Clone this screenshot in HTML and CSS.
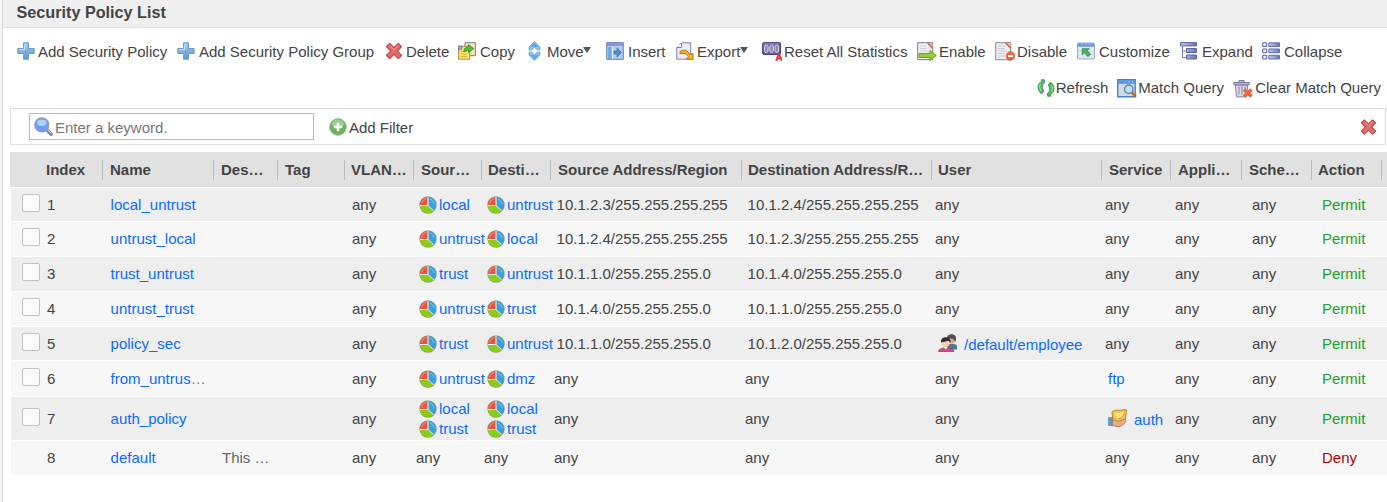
FILE: index.html
```
<!DOCTYPE html>
<html lang="en">
<head>
<meta charset="utf-8">
<title>Security Policy List</title>
<link rel="stylesheet" href="styles.css">
</head>
<body>
<svg class="sprite" width="0" height="0" aria-hidden="true">
  <defs>
    <linearGradient id="blue" x1="0" y1="0" x2="0" y2="1"><stop offset="0" stop-color="#a5cbed"/><stop offset="1" stop-color="#5c97cc"/></linearGradient>
    <linearGradient id="violet" x1="0" y1="0" x2="1" y2="0"><stop offset="0" stop-color="#c5cbed"/><stop offset="1" stop-color="#6b75b5"/></linearGradient>
    <symbol id="plus" viewBox="0 0 18 18"><path d="M6.500.8h5v5.700h5.700v5h-5.700v5.700h-5v-5.700H.8v-5h5.700z" fill="url(#blue)" stroke="#6f9cc6"/><path d="M7.700 2v5.700H2" fill="none" stroke="#c7e0f5"/></symbol>
    <symbol id="cross" viewBox="0 0 18 18"><path d="M1.500 4.500 4.700 1.500 9 5.700l4.300-4.200 3.200 3L12.300 9l4.200 4.500-3.200 3L9 12.300l-4.300 4.200-3.200-3L5.700 9z" fill="#e56b6b" stroke="#c44a4c" stroke-width="1.200" stroke-linejoin="round"/><path d="m4.700 3.500 4.300 4.200 4.300-4.200" fill="none" stroke="#f09a94"/></symbol>
    <symbol id="copy" viewBox="0 0 18 18"><path d="M7 .7h10.300v13H7z" fill="#f8efaa" stroke="#77719c"/><path d="M.7 4.200h11v13H.7z" fill="#fbe268" stroke="#a78e3c"/><path d="M.7 4.200h3v3h-3z" fill="#bcb7d6" stroke="#77719c"/><path d="M3 9.500h6m-6 2.500h6m-6 2.500h6" stroke="#d3b13e"/><path d="M6 8.500c.5-2.500 2-3.500 4.500-3.500V2.600l5.200 4-5.200 4V8.200C8.500 8 7.500 8.500 6 10z" fill="#4ec13c" stroke="#21882a" stroke-width=".8"/></symbol>
    <symbol id="move" viewBox="0 0 18 20"><path d="M7.500.5 13 6v3h-2.500l-3-2.800-3 2.800H2V6zM7.500 19.500 13 14v-3h-2.500l-3 2.800-3-2.800H2v3z" fill="#8cc4f2" stroke="#6aa6d6" stroke-width=".8"/><path d="M7.500 1.500 12 6H3zM3 14h9l-4.500 4.500z" fill="#63a6e0"/></symbol>
    <symbol id="insert" viewBox="0 0 18 18"><path d="M.7.7h16.600v16.600H.7z" fill="#b4cdee" stroke="#6c78ad"/><path d="M1 1h16v3H1z" fill="#8b97cf"/><path d="M2 5h4v12H2z" fill="#6aaae6"/><path d="M6.300 5v12" stroke="#f7fbff"/><path d="M8 9h3V5.800l4.500 4.700-4.500 4.700V12H8z" fill="#4e8ed1" stroke="#2d66aa" stroke-width=".6"/></symbol>
    <symbol id="export" viewBox="0 0 18 18"><path d="M5.500.8h9.200v16.400H.8V5.500z" fill="#e9ebf5" stroke="#7f83b3"/><path d="M.8 5.500h4.700V.8" fill="#fff" stroke="#7f83b3"/><path d="M4 9.500c4-2.500 8.500-1 9.500 3l3.500-1v6l-6.500-.7 2-2c-1.500-3-4-4-8.500-3z" fill="#ffb516" stroke="#a56c12" stroke-width=".9"/></symbol>
    <symbol id="reset" viewBox="0 0 20 19"><rect x=".6" y=".6" width="18" height="12" rx="1.500" fill="#655c9c" stroke="#464078"/><path d="M1.500 1.800h16" stroke="#9790c4"/><g fill="#8f8caa" stroke="#d6d4e2"><rect x="2.500" y="3" width="3.600" height="7.500" rx="1.700"/><rect x="7.800" y="3" width="3.600" height="7.500" rx="1.700"/><rect x="13" y="3" width="3.600" height="7.500" rx="1.700"/></g><path d="m14 18.800 3-7 3 7M15 16.500h4" fill="none" stroke="#ef3434" stroke-width="1.900"/></symbol>
    <symbol id="enable" viewBox="0 0 20 19"><path d="M.7.7h15v17H.7z" fill="#f0f0f3" stroke="#777a91"/><path d="M3 4h6M3 6.500h7M3 9h9" stroke="#cfd0d8"/><path d="M11 1h4.500v4z" fill="#f6b4aa"/><path d="m10.500.800 5.200 5.500" stroke="#f25446" stroke-width="1.500"/><path d="M2 11.500h11V8.500l6.300 5-6.300 5v-3H2z" fill="#97cf31" stroke="#6a9f24"/></symbol>
    <symbol id="disable" viewBox="0 0 20 19"><path d="M.7.7h15v17H.7z" fill="#eeeef1" stroke="#85889c"/><path d="M3 4h6M3 6.500h7M3 9h9m-9 2.500h7M3 14h7" stroke="#c7c8d1"/><path d="M11 1h4.500v4z" fill="#f6b4aa"/><path d="m10.500.800 5.200 5.500" stroke="#f25446" stroke-width="1.500"/><circle cx="15.500" cy="14" r="4.300" fill="#ef6347" stroke="#cf4a32" stroke-width=".6"/><path d="M13 14h5" stroke="#fff" stroke-width="2"/></symbol>
    <symbol id="custom" viewBox="0 0 19 18"><rect x=".6" y=".6" width="17.800" height="16.800" rx="1" fill="#e6eaf3" stroke="#939fc0"/><path d="M1 1h17v3.500H1z" fill="#6297e6"/><path d="M5 2h1m3 0h1m3 0h1" stroke="#d9e8ff"/><path d="M1 9h17M1 13h17M6 5v12m7-12v12" stroke="#cbd2e2" stroke-width=".7"/><path d="M5.500 6.500h7.500l-2 2 3.300 4.200-3 2.300-3.300-4.200-2.500 2.300z" fill="#48b55a" stroke="#2e8f48" stroke-width=".8"/></symbol>
    <symbol id="expand" viewBox="0 0 18 18"><path d="M2.500 4v11.500H7M2.500 9H7" fill="none" stroke="#7380b8"/><g fill="url(#violet)" stroke="#5a64a1"><path d="M.6.600h15.800v3.300H.6zM6.500 6.500h9.900v4H6.500zM6.500 13h9.900v4H6.500z"/></g></symbol>
    <symbol id="collapse" viewBox="0 0 18 18"><g fill="#eceefa" stroke="#5a64a1"><path d="M.7.8h4v3.700h-4zM.7 7h4v3.700h-4zM.7 13.300h4V17h-4z"/></g><g fill="url(#violet)" stroke="#6771ac"><path d="M6.800.8h10.700v3.700H6.800zM6.800 7h10.700v3.700H6.800zM6.800 13.300h10.700V17H6.800z"/></g></symbol>
    <symbol id="refresh" viewBox="0 0 18 18"><g fill="#54b965" stroke="#26803c" stroke-width=".7"><path d="M7.500.8v3C4.500 5.500 5 10 7 12l-2.500 3C-.6 11 .2 3.800 4.800 2.800L4 .8z"/><path d="M10.500 17.200v-3c3-1.700 2.500-6.200.5-8.200l2.500-3c5.100 4 4.300 11.200-.3 12.200l.8 2z"/></g><path d="M3.500 5C2 7 2.500 9.500 4 12m10.500 1c1.500-2 1-4.500-.5-7" fill="none" stroke="#a7e2af"/></symbol>
    <symbol id="match" viewBox="0 0 19 18"><path d="M.7.7h16.600v16.100H.7z" fill="#cfdae4" stroke="#4183cc" stroke-width="1.300"/><path d="M1 1h16v3.600H1z" fill="#5698e5"/><path d="M11 2.500h1m2 0h1" stroke="#d6eaff"/><circle cx="11.200" cy="9.700" r="4" fill="#b5e1f9" stroke="#6585a0" stroke-width="1.300"/><path d="m14.200 13 3.700 4" stroke="#b46c18" stroke-width="2.400"/></symbol>
    <symbol id="trash" viewBox="0 0 20 18"><path d="M2.300 5.500h12.400l-1.200 11.900h-10z" fill="#d8d8e7" stroke="#8584a5"/><path d="M.8 3h15.400v2.300H.8zM6 3V1h5v2" fill="#bebdd3" stroke="#77759a"/><path d="M6 7v8m3-8v8m3-8v4" stroke="#8583a6"/><path d="m11 10 7.500 7m0-7L11 17" stroke="#ee6040" stroke-width="3.500"/></symbol>
    <symbol id="search" viewBox="0 0 19 19"><path d="m12.500 12.500 4.600 4.600" stroke="#8c8c9b" stroke-width="3.800" stroke-linecap="round"/><path d="m14 13 3.500 3.500" stroke="#cfcfda" stroke-width="1"/><circle cx="7.800" cy="7.800" r="6.900" fill="#679df2" stroke="#9199c6" stroke-width="1.500"/><ellipse cx="7.800" cy="5.800" rx="4.800" ry="3.300" fill="#afd0ff"/></symbol>
    <symbol id="add" viewBox="0 0 18 18"><circle cx="9" cy="9" r="8.300" fill="#67b45b" stroke="#8bbb83"/><path d="M2.500 7C4-.2 14-.2 15.500 7c-4 2-9 2-13 0z" fill="#97cf8c"/><path d="M9 4.800v8.400M4.800 9h8.400" stroke="#fff" stroke-width="2.600"/></symbol>
    <symbol id="zone" viewBox="0 0 18 18"><circle cx="9" cy="9" r="8.700" fill="#7f9f86"/><path d="M8.500 1v8.200H1A8 8 0 0 1 8.500 1z" fill="#ed5142"/><path d="M9.500 1A8 8 0 0 1 15 14.300L9.500 9z" fill="#389fe0"/><path d="M1 10h8l5.400 5.200C9.500 19 2 16.700 1 10z" fill="#8dcc16"/><path d="M9 .8V9.500H.8M9 9.500l5.800 5.500" fill="none" stroke="#eff4e8" stroke-width="1"/><path d="M2.700 7.500C3 5 5 3 7.200 2.600" fill="none" stroke="#f79a84"/><path d="M11 3.200c2 .5 3.800 2.600 4.200 4.500" fill="none" stroke="#84cbf2"/></symbol>
    <symbol id="users" viewBox="0 0 20 19"><path d="M9 12c1-3 9-3 10 0v3.500H9z" fill="#4d779b"/><circle cx="13.500" cy="5.500" r="4" fill="#d8aa89"/><path d="M9 5C8-.2 15-1 17.500 2c1 2 .5 4-.2 6C16 4 13 4 9 5z" fill="#4f4e51"/><path d="M.5 17.500c.3-5 14.800-5 15.500 0z" fill="#c2557d" stroke="#8f3c5a" stroke-width=".7"/><path d="m5.500 13 2.300 2.500 2-2.500z" fill="#fff"/><circle cx="7.500" cy="9" r="4" fill="#f2cfae"/><path d="M3 8.500c-1-6 8-7 9.500-2v2.300l-2-2z" fill="#342e2e"/></symbol>
    <symbol id="service" viewBox="0 0 20 19"><path d="M4 3C7-.2 11 2.200 15 .8h3.500l-1 9-4.500 3.500-8-1z" fill="#f4c144" stroke="#b98a2c"/><path d="m6 4.500 7-1 3-1-1 6-5 2z" fill="#ffe384"/><path d="M10 9.500c3 .5 5-2 6-5" fill="none" stroke="#c9962e"/><path d="M4 11c3-1 4 2 7 1l6-2c2 2-1 6-5 7.500-3 1-5-1-8-1z" fill="#e2af82" stroke="#aa7a57" stroke-width=".8"/><path d="M.5 8.500h3.700v8H.5z" fill="#659ac5" stroke="#437294" stroke-width=".5"/></symbol>
  </defs>
</svg>
<div class="panel">
  <h1 class="title">Security Policy List</h1>
  <div class="toolbar">
    <a class="tool"><svg class="icon"><use href="#plus"/></svg><span>Add Security Policy</span></a>
    <a class="tool group"><svg class="icon"><use href="#plus"/></svg><span>Add Security Policy Group</span></a>
    <a class="tool"><svg class="icon"><use href="#cross"/></svg><span>Delete</span></a>
    <a class="tool wide"><svg class="icon"><use href="#copy"/></svg><span>Copy</span></a>
    <a class="tool tight"><svg class="icon tall"><use href="#move"/></svg><span>Move</span><i class="caret"></i></a>
    <a class="tool wide"><svg class="icon"><use href="#insert"/></svg><span>Insert</span></a>
    <a class="tool"><svg class="icon"><use href="#export"/></svg><span>Export</span><i class="caret"></i></a>
    <a class="tool big"><svg class="icon"><use href="#reset"/></svg><span>Reset All Statistics</span></a>
    <a class="tool big"><svg class="icon"><use href="#enable"/></svg><span>Enable</span></a>
    <a class="tool big"><svg class="icon"><use href="#disable"/></svg><span>Disable</span></a>
    <a class="tool wide"><svg class="icon"><use href="#custom"/></svg><span>Customize</span></a>
    <a class="tool wide"><svg class="icon"><use href="#expand"/></svg><span>Expand</span></a>
    <a class="tool wide"><svg class="icon"><use href="#collapse"/></svg><span>Collapse</span></a>
  </div>
  <div class="toolbar2">
    <a class="tool snug"><svg class="icon"><use href="#refresh"/></svg>Refresh</a>
    <a class="tool snug big"><svg class="icon"><use href="#match"/></svg>Match Query</a>
    <a class="tool big"><svg class="icon"><use href="#trash"/></svg>Clear Match Query</a>
  </div>
  <div class="filter">
    <div class="search"><svg class="icon"><use href="#search"/></svg><span>Enter a keyword.</span></div>
    <a class="addfilter"><svg class="icon"><use href="#add"/></svg><span>Add Filter</span></a>
    <svg class="icon close"><use href="#cross"/></svg>
  </div>
  <div class="table">
    <div class="row head"><span>Index</span><span>Name</span><span>Des…</span><span>Tag</span><span class="near">VLAN…</span><span>Sour…</span><span class="near">Desti…</span><span>Source Address/Region</span><span class="near">Destination Address/R…</span><span class="near">User</span><span>Service</span><span>Appli…</span><span>Sche…</span><span class="near">Action</span><span></span></div>
    <div class="rows" id="rows"></div>
  </div>
</div>
<script src="app.js"></script>
</body>
</html>
```
FILE: app.js
```
const policies = [
  ["local_untrust", "", ["local"], ["untrust"], "10.1.2.3/255.255.255.255", "10.1.2.4/255.255.255.255", 34],
  ["untrust_local", "", ["untrust"], ["local"], "10.1.2.4/255.255.255.255", "10.1.2.3/255.255.255.255", 35],
  ["trust_untrust", "", ["trust"], ["untrust"], "10.1.1.0/255.255.255.0", "10.1.4.0/255.255.255.0", 35],
  ["untrust_trust", "", ["untrust"], ["trust"], "10.1.4.0/255.255.255.0", "10.1.1.0/255.255.255.0", 35],
  ["policy_sec", "", ["trust"], ["untrust"], "10.1.1.0/255.255.255.0", "10.1.2.0/255.255.255.0", 34],
  ["from_untrus", "", ["untrust"], ["dmz"], "any", "any", 36],
  ["auth_policy", "", ["local", "trust"], ["local", "trust"], "any", "any", 44],
  ["default", "This …", [], [], "any", "any", 35]
];
const any = '<span class="any">any</span>';
const icon = (name) => `<svg class="icon"><use href="#${name}"/></svg>`;
const zones = (list) => list.length
  ? `<span class="zones">${list.map((z) => `<a class="zone">${icon("zone")}${z}</a>`).join("")}</span>`
  : '<span class="anyzone">any</span>';
const address = (a) => (a === "any" ? any : `<span class="address">${a}</span>`);

document.getElementById("rows").innerHTML = policies.map((p, i) => {
  const [name, desc, src, dst, from, to, height] = p;
  const box = i < 7 ? '<i class="check"></i>' : "";
  const dots = name === "from_untrus" ? '<span class="dots">…</span>' : "";
  const user = name === "policy_sec" ? `<a class="object">${icon("users")}/default/employee</a>` : any;
  let service = any;
  if (name === "from_untrus") service = '<a class="plain">ftp</a>';
  if (name === "auth_policy") service = `<a class="object">${icon("service")}auth</a>`;
  const action = i < 7 ? '<span class="permit">Permit</span>' : '<span class="deny">Deny</span>';
  return `<div class="row" style="height:${height}px"><span class="index">${box}<b>${i + 1}</b></span>` +
    `<span class="name"><a>${name}</a>${dots}</span><span class="desc">${desc}</span><span></span>` +
    `<span class="vlan">any</span><span>${zones(src)}</span><span>${zones(dst)}</span>` +
    `<span>${address(from)}</span><span>${address(to)}</span><span>${user}</span><span>${service}</span>` +
    `<span class="app">any</span><span class="schedule">any</span><span>${action}</span><span></span></div>`;
}).join("");
```
FILE: styles.css
```
* { box-sizing: border-box; }
body {
  margin: 0;
  height: 502px;
  overflow: hidden;
  background: #f5f5f5;
  color: #444;
  font: 15px/20px "Liberation Sans", Arial, sans-serif;
}
.sprite { display: block; }
.panel {
  height: 502px;
  margin-left: 2px;
  border-left: 1px solid #d9d9dc;
  background: #fff;
}
.title {
  height: 28px;
  margin: 0;
  padding: 2px 0 0 13.500px;
  border-bottom: 1px solid #e5e5e5;
  background: #efefef;
  font-size: 16.200px;
  line-height: 20px;
}
.icon { flex: none; display: block; width: 18px; height: 18px; }
.toolbar {
  display: grid;
  grid-template-columns: 160px 208px 73px 69px 79px 70px 86px 155px 78px 82px 103px 82px 90px;
  height: 46px;
  padding-left: 14px;
  align-items: center;
}
.tool { display: flex; align-items: center; gap: 3px; white-space: nowrap; }
.tool span { padding-top: 2px; }
.tool .tall { height: 20px; }
.wide, .group { gap: 4px; }
.tight { gap: 2px; }
.big { gap: 2px; }
.snug { gap: 1px; }
.big .icon { width: 20px; height: 19px; }
.caret { width: 8px; margin: -2px 0 0 -3px; border: 4px solid transparent; border-top: 6px solid #555; border-bottom: 0; }
.toolbar2 {
  display: flex;
  justify-content: flex-end;
  gap: 9px;
  height: 28px;
  padding-right: 6px;
  align-items: center;
}
.filter {
  display: flex;
  align-items: center;
  height: 37px;
  margin: 6px 1px 0 7px;
  padding: 0 8px 0 18px;
  border: 1px solid #dedee2;
}
.search {
  display: flex;
  align-items: center;
  width: 285px;
  height: 27px;
  padding-left: 4px;
  gap: 2px;
  border: 1px solid #b9b9b9;
  color: #777;
}
.search span, .addfilter span { padding-top: 2px; }
.search .icon { width: 19px; height: 19px; }
.addfilter { display: flex; align-items: center; gap: 2px; margin-left: 15px; }
.close { width: 17px; margin-left: auto; }
.table { margin: 7px 0 0 7px; }
.row {
  display: grid;
  grid-template-columns: 92px 111px 64px 67px 69px 68px 69px 191px 190px 170px 69px 71px 70px 70px 4px;
  align-items: center;
  border-top: 1px solid #fff;
  background: #f7f7f7;
  white-space: nowrap;
}
.row > span { min-width: 0; }
.rows { margin-left: 1px; }
.rows .row { grid-template-columns: 91px 111px 64px 67px 69px 68px 69px 191px 190px 170px 69px 71px 70px 70px 4px; }
.rows .row:nth-child(odd) { background: #eee; }
.head { height: 35px; padding-left: 1px; border: 0; background: #e1e1e1; font-weight: bold; }
.head span {
  display: flex;
  align-items: center;
  height: 20px;
  padding-left: 7px;
  border-right: 1px solid #bdbdbd;
}
.head .near { padding-left: 6px; }
.head span:first-child { padding-left: 35px; }
.head span:last-child { border: 0; }
a { color: #0a6cff; }
.tool, .addfilter { color: #444; }
.index { display: flex; align-items: center; padding-left: 11px; }
.index b { margin-left: auto; width: 55px; font-weight: normal; }
.check {
  width: 18px;
  height: 18px;
  margin-top: -4px;
  border: 1px solid #bfc2c7;
  border-radius: 2px;
  background: #fafafa;
}
.name { padding-left: 8.600px; }
.dots { color: #777; }
.desc { padding-left: 9px; color: #666; }
.vlan { padding-left: 8px; }
.any { padding-left: 4px; }
.anyzone { padding-left: 3px; }
.zones { display: flex; flex-direction: column; padding-left: 6px; }
.zone { display: flex; align-items: center; gap: 2px; }
.address { padding-left: 6.600px; }
.object { display: flex; align-items: center; padding: 2px 0 0 7px; gap: 6px; }
.object .icon { width: 20px; height: 19px; margin-top: -3px; }
.plain { padding-left: 7px; }
.app { padding-left: 5px; }
.schedule { padding-left: 11px; }
.permit, .deny { padding-left: 11px; color: #19a329; }
.deny { color: #b80000; }
```
